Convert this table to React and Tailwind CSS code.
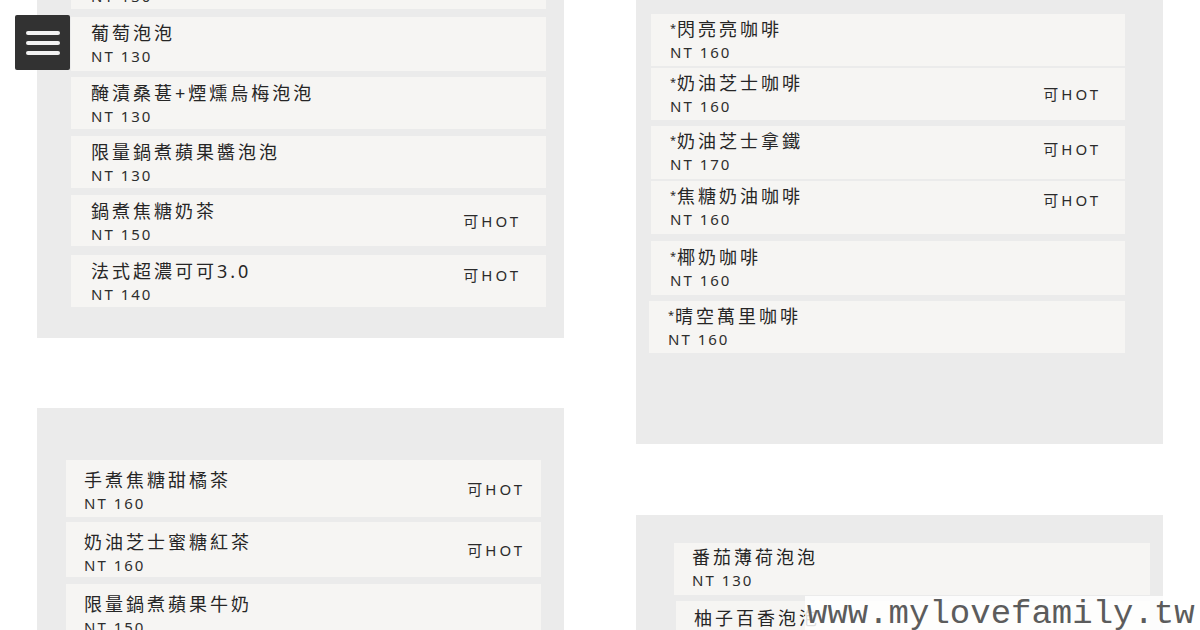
import React from "react";

const leftTop = [
  { name: "\u00a0", price: "NT 130", box: "h-[52px]" },
  { name: "葡萄泡泡", price: "NT 130", box: "mt-[8px] h-[54px]" },
  { name: "醃漬桑葚+煙燻烏梅泡泡", price: "NT 130", box: "mt-[6px] h-[52px]" },
  { name: "限量鍋煮蘋果醬泡泡", price: "NT 130", box: "mt-[7px] h-[52px]" },
  { name: "鍋煮焦糖奶茶", price: "NT 150", box: "mt-[7px] h-[51px]", hot: true },
  { name: "法式超濃可可3.0", price: "NT 140", box: "mt-[9px] h-[52px]", hot: true, hotPos: "mb-[12px]" },
];

const leftBottom = [
  { name: "手煮焦糖甜橘茶", price: "NT 160", box: "h-[57px]", pad: "pt-[9px]", hot: true },
  { name: "奶油芝士蜜糖紅茶", price: "NT 160", box: "mt-[5px] h-[55px]", pad: "pt-[9px]", hot: true },
  { name: "限量鍋煮蘋果牛奶", price: "NT 150", box: "mt-[7px] h-[57px]", pad: "pt-[9px]" },
];

const rightTop = [
  { name: "閃亮亮咖啡", price: "NT 160", star: true, box: "h-[52px]", pad: "pt-[4px]" },
  { name: "奶油芝士咖啡", price: "NT 160", star: true, box: "mt-[2px] h-[52px]", pad: "pt-[4px]", hot: true },
  { name: "奶油芝士拿鐵", price: "NT 170", star: true, box: "mt-[6px] h-[53px]", pad: "pt-[4px]", hot: true, hotPos: "mb-[8px]" },
  { name: "焦糖奶油咖啡", price: "NT 160", star: true, box: "mt-[2px] h-[53px]", pad: "pt-[4px]", hot: true, hotPos: "mb-[16px]" },
  { name: "椰奶咖啡", price: "NT 160", star: true, box: "mt-[7px] h-[54px]", pad: "pt-[5px]" },
  { name: "晴空萬里咖啡", price: "NT 160", star: true, box: "mt-[6px] -ml-[2px] h-[52px] pl-[17px]", pad: "pt-[4px]" },
];

const rightBottom = [
  { name: "番茄薄荷泡泡", price: "NT 130", box: "h-[52px]", pad: "pt-[3px]" },
  { name: "柚子百香泡泡", price: "NT 130", box: "mt-[6px] ml-[2px] h-[52px]", pad: "pt-[6px]" },
];

function MenuCard({ item, padLeft, hotRight }) {
  return (
    <div
      className={`flex shrink-0 items-center justify-between bg-[#f6f5f3] ${padLeft} ${hotRight} ${item.box}`}
    >
      <div className={`flex h-full flex-col ${item.pad || "pt-[5px]"}`}>
        <div className="whitespace-nowrap text-[18px] leading-[22px] tracking-[3px] text-[#262626]">
          {item.star && (
            <span className="relative -top-[4px] mr-[1px] text-[11px] leading-none tracking-normal">*</span>
          )}
          {item.name}
        </div>
        <div className="text-[15px] leading-[24px] tracking-[2px] text-[#2e2e2e]">{item.price}</div>
      </div>
      {item.hot && (
        <div className={`text-[15px] leading-[22px] tracking-[3px] text-[#2b2b2b] ${item.hotPos || ""}`}>可HOT</div>
      )}
    </div>
  );
}

export default function App() {
  return (
    <div className="relative h-[630px] w-[1200px] overflow-hidden bg-white font-['Noto_Sans','Noto_Sans_CJK_TC',sans-serif]">
      <div className="flex items-start">
        {/* left column */}
        <div className="ml-[37px] -mt-[43px] flex w-[527px] flex-col">
          <section className="flex flex-col bg-[#ebebeb] pb-[31px] pl-[34px] pr-[18px]">
            {leftTop.map((item, i) => (
              <MenuCard key={i} item={item} padLeft="pl-[20px]" hotRight="pr-[25px]" />
            ))}
          </section>
          <section className="mt-[70px] flex h-[260px] flex-col bg-[#ebebeb] pl-[29px] pr-[23px] pt-[52px]">
            {leftBottom.map((item, i) => (
              <MenuCard key={i} item={item} padLeft="pl-[18px]" hotRight="pr-[16px]" />
            ))}
          </section>
        </div>

        {/* right column */}
        <div className="ml-[72px] flex w-[527px] flex-col">
          <section className="flex flex-col bg-[#ebebeb] pb-[91px] pl-[15px] pr-[38px] pt-[14px]">
            {rightTop.map((item, i) => (
              <MenuCard key={i} item={item} padLeft="pl-[19px]" hotRight="pr-[24px]" />
            ))}
          </section>
          <section className="mt-[71px] flex h-[200px] flex-col bg-[#ebebeb] pl-[38px] pr-[13px] pt-[28px]">
            {rightBottom.map((item, i) => (
              <MenuCard key={i} item={item} padLeft="pl-[18px]" hotRight="pr-[24px]" />
            ))}
          </section>
        </div>
      </div>

      {/* menu button */}
      <button className="absolute left-[15px] top-[15px] flex h-[55px] w-[55px] flex-col items-center justify-center gap-[6px] rounded-[2px] bg-[#323232]">
        <span className="block h-[4px] w-[34px] rounded-full bg-[#f2f2f2]" />
        <span className="block h-[4px] w-[34px] rounded-full bg-[#f2f2f2]" />
        <span className="block h-[4px] w-[34px] rounded-full bg-[#f2f2f2]" />
      </button>

      {/* watermark */}
      <div className="absolute left-[805px] top-[596px] h-[34px] w-[395px] bg-white/85 pl-[2px] font-['Liberation_Mono',monospace] text-[34px] leading-[36px] text-[#5c5c5c]">
        www.mylovefamily.tw
      </div>
    </div>
  );
}
